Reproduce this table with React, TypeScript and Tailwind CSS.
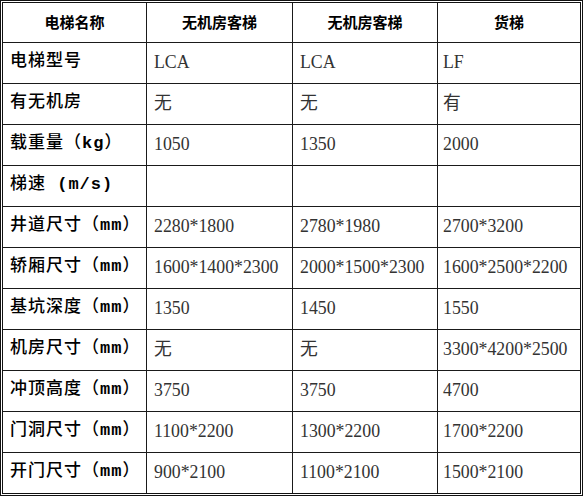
import React from "react";

const rows: [string, string, string, string][] = [
  ["电梯型号", "LCA", "LCA", "LF"],
  ["有无机房", "无", "无", "有"],
  ["载重量（kg）", "1050", "1350", "2000"],
  ["梯速 (m/s)", "", "", ""],
  ["井道尺寸（mm）", "2280*1800", "2780*1980", "2700*3200"],
  ["轿厢尺寸（mm）", "1600*1400*2300", "2000*1500*2300", "1600*2500*2200"],
  ["基坑深度（mm）", "1350", "1450", "1550"],
  ["机房尺寸（mm）", "无", "无", "3300*4200*2500"],
  ["冲顶高度（mm）", "3750", "3750", "4700"],
  ["门洞尺寸（mm）", "1100*2200", "1300*2200", "1700*2200"],
  ["开门尺寸（mm）", "900*2100", "1100*2100", "1500*2100"],
];

const headers = ["电梯名称", "无机房客梯", "无机房客梯", "货梯"];

// unit letters are drawn heavier than the surrounding CJK text
function Label({ text }: { text: string }) {
  return (
    <span>
      {text.split(/([a-z/()]+)/).map((part, i) =>
        /[a-z]/.test(part) ? (
          <span className="font-bold" key={i}>
            {part}
          </span>
        ) : (
          <React.Fragment key={i}>{part}</React.Fragment>
        ),
      )}
    </span>
  );
}

export default function App() {
  return (
    <div className="min-h-[500px] w-[585px] bg-white">
      <div className="w-[583px] border-[3px] border-double border-[#111]">
        <div className="grid grid-cols-[143px_145px_144px_142px] grid-rows-[39px_repeat(11,40px)] gap-px bg-[#1a1a1a]">
          {/* ── Header row ── */}
          {headers.map((h, i) => (
            <div
              className="flex items-center justify-center bg-white font-['Noto_Sans_CJK_SC',sans-serif] text-[15px] font-semibold text-black"
              key={i}
            >
              {h}
            </div>
          ))}

          {/* ── Data rows ── */}
          {rows.map((r, ri) => (
            <React.Fragment key={ri}>
              <div className="flex items-center whitespace-pre bg-white pb-[2px] pl-[7px] font-['Liberation_Mono','Noto_Sans_CJK_SC',monospace] text-[17px] font-medium tracking-[1px] text-black">
                <Label text={r[0]} />
              </div>
              {r.slice(1).map((c, ci) => (
                <div
                  className={`flex items-center whitespace-nowrap bg-white pb-[1px] font-['Liberation_Serif','Noto_Sans_CJK_SC',serif] text-[17.8px] text-[#333] ${
                    ci === 2 ? "pl-[5px]" : "pl-[7px]"
                  }`}
                  key={ci}
                >
                  {c}
                </div>
              ))}
            </React.Fragment>
          ))}
        </div>
      </div>
    </div>
  );
}
